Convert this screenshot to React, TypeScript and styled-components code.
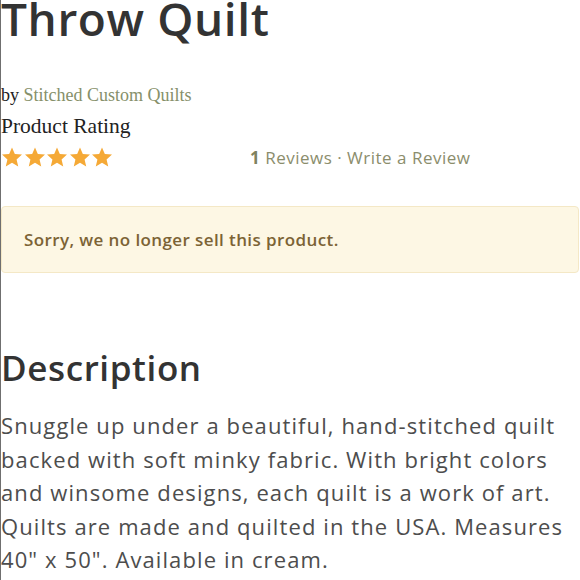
import styled, { createGlobalStyle } from "styled-components";

const GlobalStyle = createGlobalStyle`
  html, body {
    margin: 0;
    padding: 0;
    background: #fff;
  }
  body {
    font-family: "Open Sans", "Liberation Sans", sans-serif;
    color: #333;
  }
`;

const Page = styled.div`
  width: 580px;
  height: 580px;
  overflow: hidden;
  border-left: 1px solid #6f6f6f;
  box-sizing: border-box;
`;

const Title = styled.h1`
  margin: -10px 0 0 0;
  font-size: 46px;
  line-height: 56px;
  font-weight: 600;
  color: #333;
  letter-spacing: 0.6px;
`;

const Vendor = styled.div`
  margin-top: 38px;
  font-family: "Liberation Serif", serif;
  font-size: 18px;
  line-height: 22px;
  color: #222;
  a {
    color: #86906a;
    text-decoration: none;
  }
`;

const RatingLabel = styled.div`
  margin-top: 7px;
  font-family: "Liberation Serif", serif;
  font-size: 21.5px;
  line-height: 26px;
  color: #222;
`;

const RatingRow = styled.div`
  display: flex;
  align-items: center;
  height: 28px;
  margin-top: 4px;
`;

const Stars = styled.div`
  display: flex;
  width: 249px;
`;

const Star = styled.svg`
  width: 22px;
  height: 22px;
  margin-right: 0.5px;
  fill: #f5a936;
`;

const ReviewLinks = styled.div`
  font-size: 17px;
  letter-spacing: 0.5px;
  color: #8b8d6c;
  strong {
    font-weight: 700;
    color: #7f8360;
  }
`;

const Notice = styled.div`
  margin-top: 35px;
  margin-right: 1px;
  height: 67px;
  box-sizing: border-box;
  display: flex;
  align-items: center;
  padding: 0 22px;
  background: #fdf7e4;
  border: 1px solid #f4e8c6;
  border-radius: 4px;
  font-size: 17px;
  letter-spacing: 0.4px;
  font-weight: 600;
  color: #7c6335;
`;

const SectionHeading = styled.h2`
  margin: 74px 0 0 0;
  font-size: 35px;
  line-height: 42px;
  font-weight: 600;
  letter-spacing: 0.6px;
  color: #333;
`;

const Body = styled.p`
  margin: 20px 0 0 0;
  font-size: 22px;
  line-height: 33.5px;
  letter-spacing: 1.1px;
  color: #4d4d4d;
`;

const StarIcon = () => (
  <Star viewBox="0 0 24 24">
    <path d="M12 1.5l3.1 7.2 7.8.7-5.9 5.2 1.8 7.7L12 18.2l-6.8 4.1 1.8-7.7L1.1 9.4l7.8-.7z" />
  </Star>
);

export default function App() {
  return (
    <Page>
      <GlobalStyle />
      <Title>Throw Quilt</Title>
      <Vendor>
        by <a href="#">Stitched Custom Quilts</a>
      </Vendor>
      <RatingLabel>Product Rating</RatingLabel>
      <RatingRow>
        <Stars>
          {[0, 1, 2, 3, 4].map((i) => (
            <StarIcon key={i} />
          ))}
        </Stars>
        <ReviewLinks>
          <strong>1</strong> Reviews · Write a Review
        </ReviewLinks>
      </RatingRow>
      <Notice>Sorry, we no longer sell this product.</Notice>
      <SectionHeading>Description</SectionHeading>
      <Body>
        Snuggle up under a beautiful, hand-stitched quilt backed with soft minky
        fabric. With bright colors and winsome designs, each quilt is a work of
        art. Quilts are made and quilted in the USA. Measures 40" x 50".
        Available in cream.
      </Body>
    </Page>
  );
}
